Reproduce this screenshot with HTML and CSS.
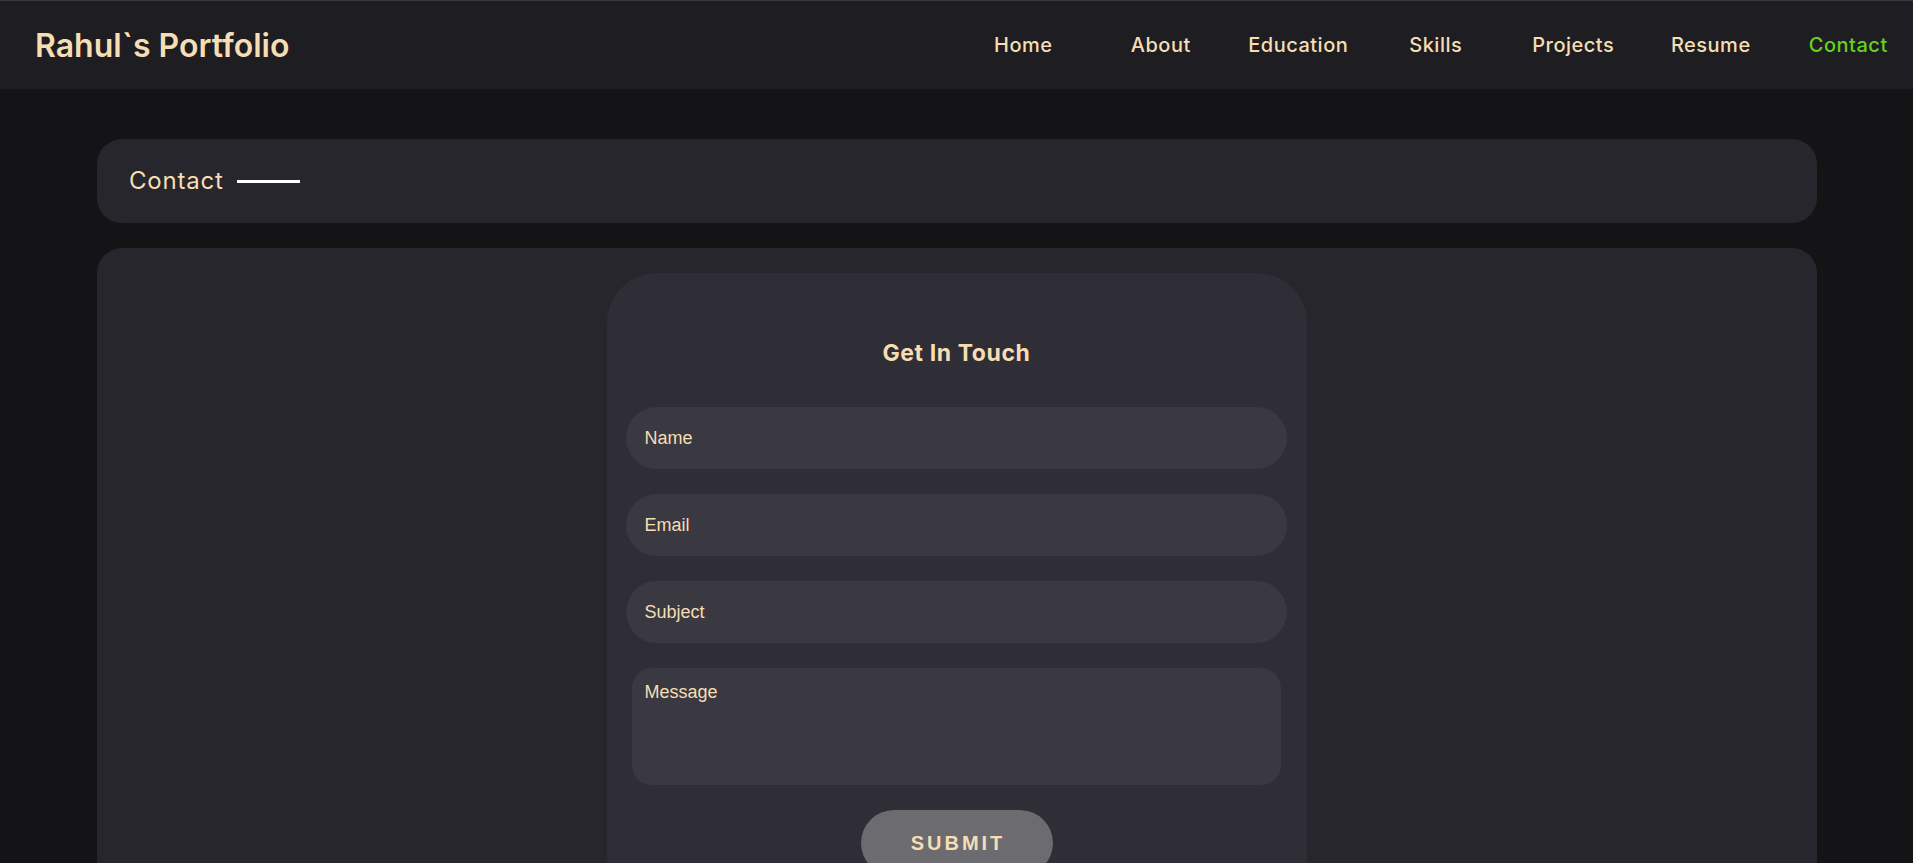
FILE: index.html
```html
<!DOCTYPE html>
<html lang="en">
<head>
<meta charset="utf-8">
<title>Rahul`s Portfolio</title>
<link rel="stylesheet" href="styles.css">
</head>
<body>
<header class="topbar">
  <a class="logo" href="#">Rahul`s Portfolio</a>
  <nav class="nav">
    <a class="nav-link" href="#">Home</a>
    <a class="nav-link" href="#">About</a>
    <a class="nav-link" href="#">Education</a>
    <a class="nav-link" href="#">Skills</a>
    <a class="nav-link" href="#">Projects</a>
    <a class="nav-link" href="#">Resume</a>
    <a class="nav-link active" href="#">Contact</a>
  </nav>
</header>
<main class="page">
  <section class="section-head">
    <h1 class="section-title">Contact</h1>
    <span class="section-rule"></span>
  </section>
  <section class="section-body">
    <form class="contact-form">
      <h2 class="form-title">Get In Touch</h2>
      <input class="field" type="text" placeholder="Name">
      <input class="field" type="email" placeholder="Email">
      <input class="field" type="text" placeholder="Subject">
      <textarea class="field-area" placeholder="Message"></textarea>
      <button class="submit" type="button">SUBMIT</button>
    </form>
  </section>
</main>
</body>
</html>
```
FILE: styles.css
```css
html {
  scrollbar-width: none;
}
* {
  box-sizing: border-box;
}
body {
  margin: 0;
  background: #141416;
  font-family: "Inter", "Liberation Sans", sans-serif;
  color: #f5deb3;
}
.topbar {
  height: 89px;
  border-top: 1px solid #3a3a40;
  background: #1e1d22;
  display: flex;
  align-items: center;
  justify-content: space-between;
  padding-left: 35px;
  overflow: hidden;
}
.logo {
  font-size: 32px;
  font-weight: 600;
  color: #f5deb3;
  text-decoration: none;
  letter-spacing: 0;
}
.nav {
  display: flex;
  margin-right: -4px;
}
.nav-link {
  width: 137.5px;
  text-align: center;
  font-size: 20px;
  font-weight: 500;
  letter-spacing: 0.5px;
  color: #f5deb3;
  text-decoration: none;
}
.nav-link.active {
  color: #66d11f;
}
.page {
  padding: 50px 96px 40px 97px;
}
.section-head {
  height: 84px;
  border-radius: 25px;
  background: #27262c;
  display: flex;
  align-items: center;
  gap: 13px;
  padding-left: 32px;
}
.section-title {
  margin: 0;
  font-size: 24px;
  font-weight: 400;
  letter-spacing: 0.8px;
  line-height: 1;
}
.section-rule {
  width: 63px;
  height: 3px;
  background: #ffffff;
}
.section-body {
  margin-top: 25px;
  border-radius: 25px;
  background: #27262c;
  padding: 25px 0;
  display: flex;
  justify-content: center;
}
.contact-form {
  width: 700px;
  background: #2f2e36;
  border-radius: 50px;
  padding: 69px 20px 30px 19px;
  display: flex;
  flex-direction: column;
  gap: 25px;
}
.form-title {
  margin: 0 0 18px;
  text-align: center;
  font-size: 23px;
  line-height: 22px;
  font-weight: 700;
  letter-spacing: 0.6px;
}
.field,
.field-area {
  border: none;
  outline: none;
  background: #3a3942;
  color: #f5deb3;
  font-family: "Liberation Sans", Arial, sans-serif;
  font-size: 18px;
}
.field {
  height: 62px;
  border-radius: 31px;
  padding: 0 18.5px;
}
.field-area {
  height: 117px;
  margin: 0 6px;
  border-radius: 20px;
  padding: 13.5px 12.5px;
  resize: none;
}
.field::placeholder,
.field-area::placeholder {
  color: #f5deb3;
  opacity: 1;
}
.submit {
  align-self: center;
  width: 192px;
  height: 66px;
  border: none;
  border-radius: 33px;
  background: #6b6b70;
  color: #f5deb3;
  font-family: "Liberation Sans", Arial, sans-serif;
  font-size: 20px;
  font-weight: 700;
  letter-spacing: 3px;
  padding: 0 0 0 3px;
}
```
